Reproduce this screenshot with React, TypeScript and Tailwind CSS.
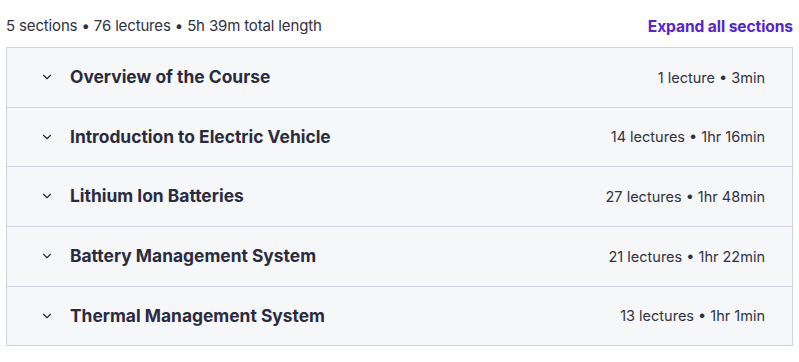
import { ChevronDown } from "lucide-react";

const sections = [
  { title: "Overview of the Course", meta: "1 lecture • 3min", h: "h-[59px]" },
  { title: "Introduction to Electric Vehicle", meta: "14 lectures • 1hr 16min", h: "h-[59px]" },
  { title: "Lithium Ion Batteries", meta: "27 lectures • 1hr 48min", h: "h-[60px]" },
  { title: "Battery Management System", meta: "21 lectures • 1hr 22min", h: "h-[60px]" },
  { title: "Thermal Management System", meta: "13 lectures • 1hr 1min", h: "h-[59px]" },
];

export default function App() {
  return (
    <div className="w-[799px] h-[362px] bg-white font-['Inter',sans-serif] text-[#2d2f31]">
      <div className="flex items-center justify-between px-[6px] h-[47px] pt-[6px]">
        <span className="text-[15px] tracking-[-0.15px] text-[#303141]">
          5 sections • 76 lectures • 5h 39m total length
        </span>
        <span className="text-[15.6px] font-bold text-[#5624d0] tracking-[-0.1px]">Expand all sections</span>
      </div>

      <div className="ml-[6px] w-[787px] border border-[#d1d2e0]">
        {sections.map((s, i) => (
          <div
            key={s.title}
            className={
              "flex items-center justify-between bg-[#f6f7f9] pl-[33px] pr-[27px] " +
              s.h +
              (i > 0 ? " border-t border-[#d1d2e0]" : "")
            }
          >
            <div className="flex items-center gap-[16px]">
              <ChevronDown size={14} strokeWidth={2} className="text-[#2a2b3f]" />
              <span className="text-[17.4px] font-bold text-[#2a2b3f]">{s.title}</span>
            </div>
            <span className="text-[14.5px] text-[#303141]">{s.meta}</span>
          </div>
        ))}
      </div>
    </div>
  );
}
